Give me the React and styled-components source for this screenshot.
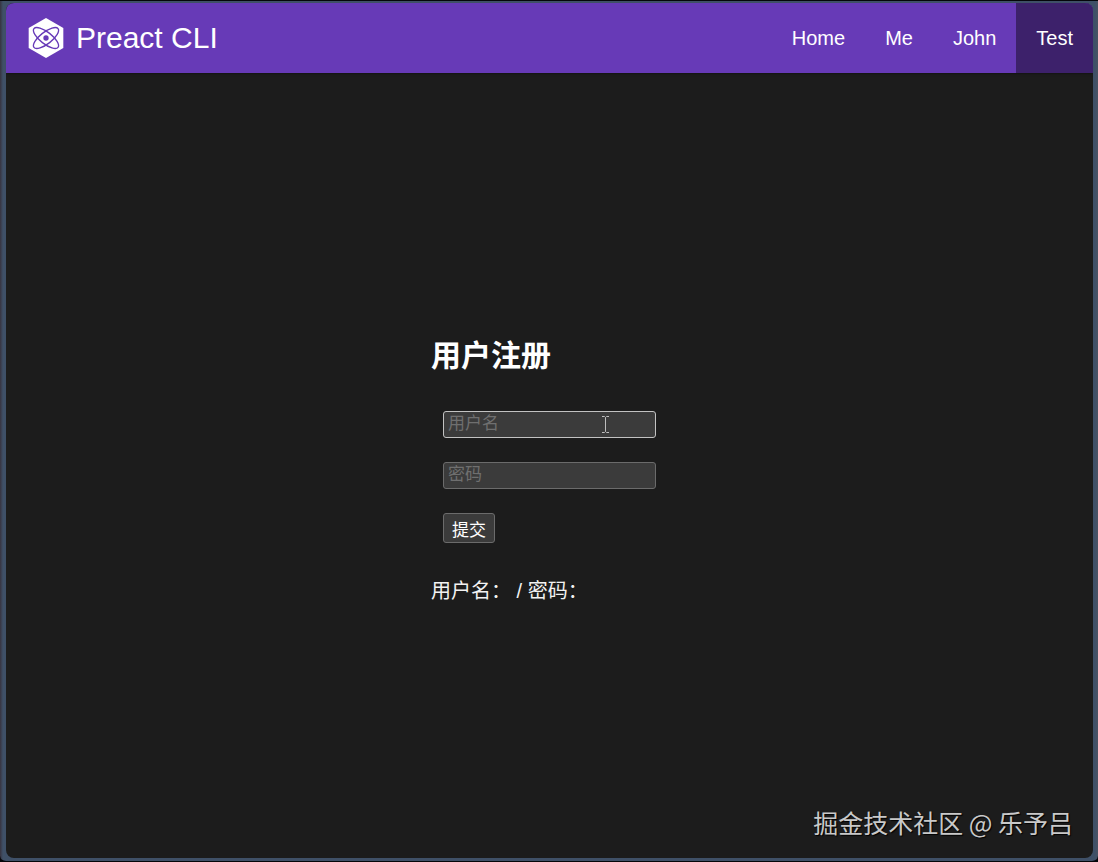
import React, { useState } from 'react';
import styled, { createGlobalStyle } from 'styled-components';

const GlobalStyle = createGlobalStyle`
  * {
    box-sizing: border-box;
  }

  body {
    margin: 0;
    background: #05060a;
    font-family: 'Liberation Sans', 'Noto Sans CJK SC', sans-serif;
  }
`;

const Desktop = styled.div`
  display: flex;
  min-height: 100vh;
  padding: 2px 5px 3px 6px;
  border-top: 1px solid #05060a;
  border-bottom: 1px solid #05060a;
  border-radius: 0 0 6px 6px;
  background: linear-gradient(to right, #37333f, #3f5067 3px, #3f5067 calc(100% - 3px), #4a5362);
`;

const Window = styled.div`
  position: relative;
  flex: 1;
  display: flex;
  flex-direction: column;
  background: #1c1c1c;
  border-radius: 8px;
  overflow: hidden;
`;

const Header = styled.header`
  display: flex;
  align-items: stretch;
  justify-content: space-between;
  height: 70px;
  background: #673ab7;
  box-shadow: 0 0 3px rgba(0, 0, 0, 0.6);
`;

const Brand = styled.a`
  display: flex;
  align-items: center;
  gap: 10px;
  padding: 0 20px;
  color: #fff;
  font-size: 30px;
  text-decoration: none;
`;

const Nav = styled.nav`
  display: flex;
`;

const NavLink = styled.a`
  display: flex;
  align-items: center;
  padding: 0 20px;
  color: #fff;
  font-size: 20px;
  text-decoration: none;
  background: ${({ $active }) => ($active ? '#3d216b' : 'transparent')};
`;

const Main = styled.main`
  flex: 1;
  display: flex;
  flex-direction: column;
  align-items: center;
  justify-content: center;
  padding-top: 8px;
`;

const Title = styled.h1`
  margin: 0 0 23px;
  color: #fff;
  font-size: 30px;
  line-height: 40px;
`;

const Form = styled.form`
  display: flex;
  flex-direction: column;
  align-items: flex-start;
  gap: 24px;
  padding: 12px;
`;

const Field = styled.div`
  position: relative;
  display: flex;
`;

const Input = styled.input`
  width: 213px;
  height: 27px;
  padding: 0 4px 2px;
  border: 1px solid ${({ $highlighted }) => ($highlighted ? '#c2c2c2' : '#6b6b6b')};
  border-radius: 3px;
  background: #3b3b3b;
  color: #fff;
  font-family: inherit;
  font-size: 17px;

  &::placeholder {
    color: #6f6f6f;
  }
`;

const TextCursor = styled.svg`
  position: absolute;
  top: 5px;
  right: 46px;
  pointer-events: none;
`;

const SubmitButton = styled.button`
  height: 30px;
  padding: 0 8px;
  border: 1px solid #6b6b6b;
  border-radius: 3px;
  background: #3b3b3b;
  color: #fff;
  font-family: inherit;
  font-size: 17px;
`;

const Result = styled.p`
  margin: 24px 0 0;
  color: #f2f2f2;
  font-size: 20px;
  line-height: 24px;
`;

const Watermark = styled.div`
  position: absolute;
  right: 20px;
  bottom: 18px;
  color: #c9c9c9;
  font-family: 'Noto Sans CJK SC', sans-serif;
  font-size: 25px;
  line-height: 36px;
  text-shadow: 1px 1px 1px #000;
`;

const links = ['Home', 'Me', 'John', 'Test'];

function PreactLogo() {
  return (
    <svg width="40" height="40" viewBox="-256 -256 512 512" aria-hidden="true">
      <path d="M0-256 221.7-128V128L0 256-221.7 128V-128z" fill="#fff" />
      <g fill="none" stroke="#673ab8" strokeWidth="17">
        <ellipse rx="75" ry="196" transform="rotate(52)" />
        <ellipse rx="75" ry="196" transform="rotate(-52)" />
      </g>
      <circle r="34" fill="#673ab8" />
    </svg>
  );
}

function App() {
  const [form, setForm] = useState({ username: '', password: '' });
  const [submitted, setSubmitted] = useState({ username: '', password: '' });

  const handleChange = (e) => {
    setForm({ ...form, [e.target.name]: e.target.value });
  };

  const handleSubmit = (e) => {
    e.preventDefault();
    setSubmitted(form);
  };

  return (
    <Desktop>
      <GlobalStyle />
      <Window>
        <Header>
          <Brand href="#home">
            <PreactLogo />
            Preact CLI
          </Brand>
          <Nav>
            {links.map((link) => (
              <NavLink key={link} href={`#${link.toLowerCase()}`} $active={link === 'Test'}>
                {link}
              </NavLink>
            ))}
          </Nav>
        </Header>

        <Main>
          <div>
            <Title>用户注册</Title>
            <Form onSubmit={handleSubmit}>
              <Field>
                <Input
                  $highlighted
                  name="username"
                  aria-label="用户名"
                  placeholder="用户名"
                  value={form.username}
                  onChange={handleChange}
                />
                <TextCursor width="9" height="17" viewBox="0 0 9 17" fill="none" stroke="#bdbdbd">
                  <path d="M1 .5h2.5l1 1 1-1H8M4.500 1.500v14M1 16.500h2.500l1-1 1 1H8" />
                </TextCursor>
              </Field>
              <Field>
                <Input
                  type="password"
                  name="password"
                  aria-label="密码"
                  placeholder="密码"
                  value={form.password}
                  onChange={handleChange}
                />
              </Field>
              <SubmitButton type="submit">提交</SubmitButton>
            </Form>
            <Result>
              用户名：{submitted.username} / 密码：{submitted.password}
            </Result>
          </div>
        </Main>

        <Watermark>掘金技术社区 @ 乐予吕</Watermark>
      </Window>
    </Desktop>
  );
}

export default App;
